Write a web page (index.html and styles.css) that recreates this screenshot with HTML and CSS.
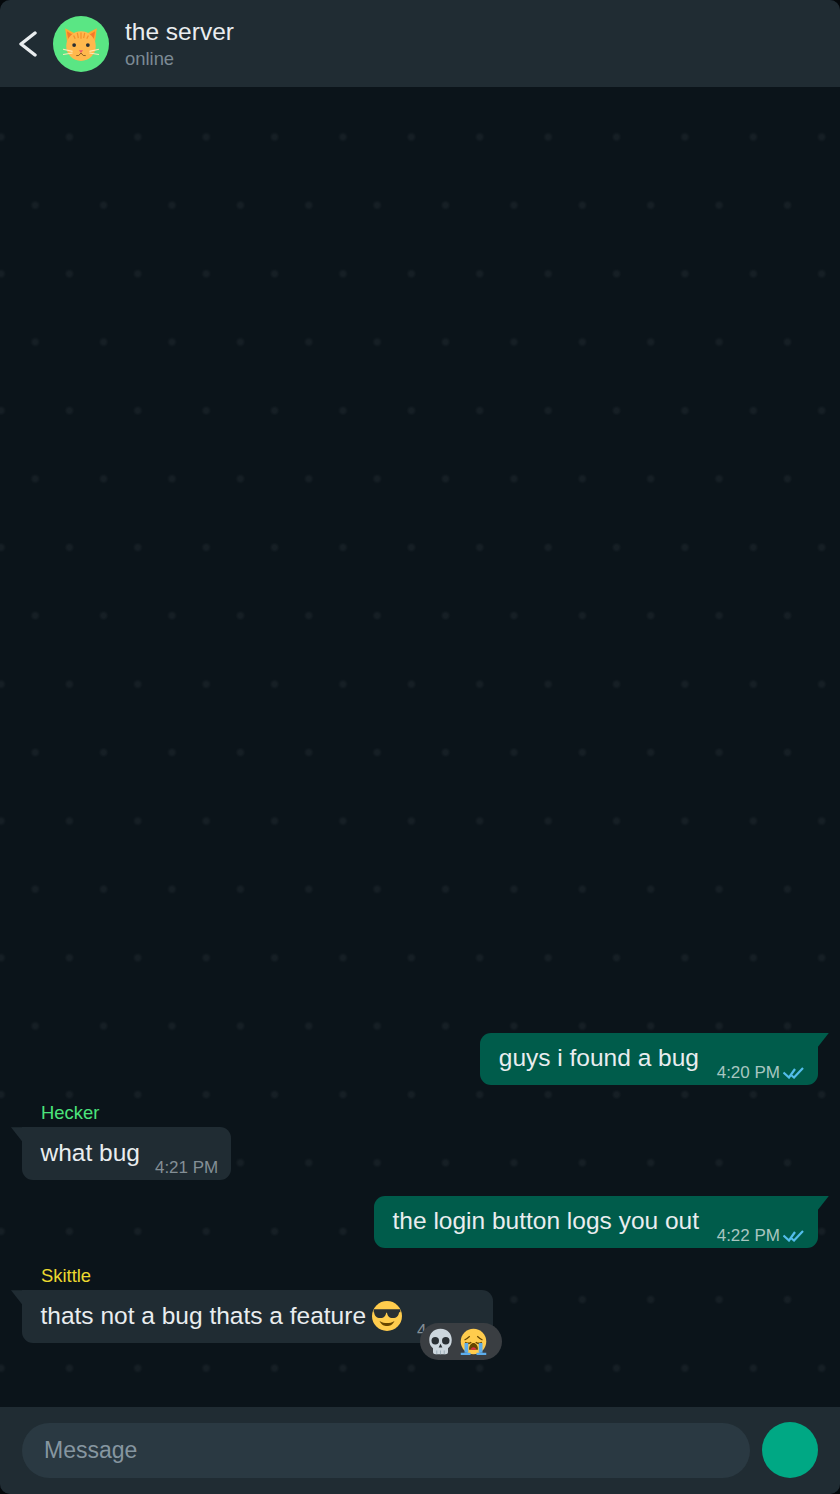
FILE: index.html
```html
<!DOCTYPE html>
<html lang="en">
<head>
    <meta charset="UTF-8">
    <meta name="viewport" content="width=device-width, initial-scale=1.0">
    <title>the server</title>
    <link rel="stylesheet" href="styles.css">
</head>
<body>
    <div class="app">
        <header class="chat-header">
            <svg class="back-icon" viewBox="0 0 20 26" width="20" height="26">
                <path d="M17 2 L3 13 L17 24" fill="none" stroke="#e9edef" stroke-width="3.400" stroke-linecap="round" stroke-linejoin="round"/>
            </svg>
            <div class="avatar">
                <svg viewBox="0 0 36 36" width="38" height="38">
                    <path d="M3 3 L5 18 L14 9 Z" fill="#ffac33"/>
                    <path d="M33 3 L31 18 L22 9 Z" fill="#ffac33"/>
                    <path d="M4.600 6 L6 14 L10.500 9.500 Z" fill="#f4792b"/>
                    <path d="M31.400 6 L30 14 L25.500 9.500 Z" fill="#f4792b"/>
                    <ellipse cx="18" cy="20" rx="14" ry="14" fill="#ffb84d"/>
                    <path d="M18 7v6M14.500 7.500l1 5M21.500 7.500l-1 5M11 10l1.500 3M25 10l-1.500 3" stroke="#f4902b" stroke-width="1.200" fill="none"/>
                    <circle cx="11.500" cy="19" r="1.800" fill="#292f33"/>
                    <circle cx="24.500" cy="19" r="1.800" fill="#292f33"/>
                    <path d="M16 24h4l-2 2.500z" fill="#ea596e"/>
                    <path d="M13.500 29q2.500 1 4.500 -2.500q2 3.500 4.500 2.500" stroke="#8a5a1e" stroke-width="0.900" fill="none"/>
                    <path d="M1 23l9 2M1 28l9 -1.500M35 23l-9 2M35 28l-9 -1.500" stroke="#ffe8b6" stroke-width="1" fill="none"/>
                </svg>
            </div>
            <div class="chat-title">
                <div class="chat-name">the server</div>
                <div class="chat-status">online</div>
            </div>
        </header>

        <main class="chat-body">
            <div class="msg sent">
                <div class="bubble">
                    <span class="msg-text">guys i found a bug</span>
                    <span class="msg-time">4:20 PM</span>
                    <svg class="ticks" viewBox="0 0 21 12" width="21" height="12">
                        <path d="M.5 5.500 L6 10.500 L12 2M8 8 L11 10.500 L20 1" fill="none" stroke="#53bdeb" stroke-width="2.200"/>
                    </svg>
                </div>
            </div>

            <div class="msg received">
                <div class="sender sender-green">Hecker</div>
                <div class="bubble">
                    <span class="msg-text">what bug</span>
                    <span class="msg-time">4:21 PM</span>
                </div>
            </div>

            <div class="msg sent">
                <div class="bubble">
                    <span class="msg-text">the login button logs you out</span>
                    <span class="msg-time">4:22 PM</span>
                    <svg class="ticks" viewBox="0 0 21 12" width="21" height="12">
                        <path d="M.5 5.500 L6 10.500 L12 2M8 8 L11 10.500 L20 1" fill="none" stroke="#53bdeb" stroke-width="2.200"/>
                    </svg>
                </div>
            </div>

            <div class="msg received">
                <div class="sender sender-yellow">Skittle</div>
                <div class="bubble">
                    <span class="msg-text">thats not a bug thats a feature</span>
                    <svg class="inline-emoji" viewBox="0 0 36 36" width="30" height="30">
                        <circle cx="18" cy="18" r="18" fill="#ffcc4d"/>
                        <path d="M2 10h32v3.500h-1.500c-.5 4.500-3 7-7.500 7s-6.500-3-7-6.500h-1c-.5 3.500-2.500 6.500-7 6.500s-7-2.500-7.500-7H2z" fill="#292f33"/>
                        <path d="M9 24c2 4.500 5.500 6 9 6s7-1.500 9-6c-3 2-6 2.500-9 2.500S12 26 9 24z" fill="#664500"/>
                    </svg>
                    <span class="msg-time">4:23 PM</span>
                    <div class="reactions">
                        <svg viewBox="0 0 36 36" width="27" height="27">
                            <path d="M18 1C8 1 3 8 3 16c0 5 2 9 5 11v5c0 2 1.500 3 3 3h14c1.500 0 3-1 3-3v-5c3-2 5-6 5-11C33 8 28 1 18 1z" fill="#ccd6dd"/>
                            <circle cx="11" cy="17" r="5" fill="#292f33"/>
                            <circle cx="25" cy="17" r="5" fill="#292f33"/>
                            <path d="M18 21l-2.500 5h5z" fill="#292f33"/>
                            <path d="M13 30v5M18 30v5M23 30v5" stroke="#99aab5" stroke-width="1.200"/>
                        </svg>
                        <svg viewBox="0 0 36 36" width="27" height="27">
                            <circle cx="18" cy="18" r="17" fill="#ffcc4d"/>
                            <path d="M6 16c2-1 5-3 7-5M30 16c-2-1-5-3-7-5" stroke="#664500" stroke-width="1.500" fill="none"/>
                            <path d="M7 19q4 3 8 0M21 19q4 3 8 0" stroke="#664500" stroke-width="2" fill="none"/>
                            <path d="M12 29c0-6 3-9 6-9s6 3 6 9z" fill="#664500"/>
                            <path d="M14.500 29c0-2 1.500-3.500 3.500-3.500s3.500 1.500 3.500 3.500z" fill="#dd2e44"/>
                            <path d="M6 20h5v13H6zM25 20h5v13h-5z" fill="#5dadec"/>
                            <path d="M1 33h13v3H1zM22 33h13v3H22z" fill="#5dadec"/>
                        </svg>
                    </div>
                </div>
            </div>
        </main>

        <footer class="composer">
            <div class="message-input">Message</div>
            <div class="send-button"></div>
        </footer>
    </div>
</body>
</html>
```

FILE: styles.css
```css
* {
    box-sizing: border-box;
}

html, body {
    height: 100%;
    margin: 0;
    background-color: #05090c;
    font-family: "Liberation Sans", Arial, sans-serif;
}

.app {
    display: flex;
    flex-direction: column;
    height: 1494px;
    overflow: hidden;
    border-radius: 10px;
    background-color: #0b141a;
    background-image:
        radial-gradient(circle, #161f25 0, #161f25 2px, rgba(22, 31, 37, 0) 5px),
        radial-gradient(circle, #161f25 0, #161f25 2px, rgba(22, 31, 37, 0) 5px);
    background-size: 68.4px 136.8px;
    background-position: -33.2px 68.6px, 1px 0;
}

.chat-header {
    display: flex;
    align-items: center;
    flex: none;
    height: 87px;
    padding-left: 18px;
    background-color: #202c33;
}

.back-icon {
    flex: none;
    margin-top: 1px;
}

.avatar {
    display: flex;
    align-items: center;
    justify-content: center;
    flex: none;
    width: 56px;
    height: 56px;
    margin-left: 15px;
    border-radius: 50%;
    background-color: #5ae684;
}

.chat-title {
    margin-left: 16px;
}

.chat-name {
    font-size: 24.5px;
    line-height: 29px;
    color: #e9edef;
}

.chat-status {
    margin-top: 1px;
    font-size: 18.4px;
    line-height: 24px;
    color: #7b8a94;
}

.chat-body {
    display: flex;
    flex: 1;
    flex-direction: column;
    justify-content: flex-end;
    gap: 16px;
    padding: 0 22px 64.25px;
}

.msg {
    display: flex;
    flex-direction: column;
}

.msg.sent {
    align-items: flex-end;
}

.msg.received {
    align-items: flex-start;
}

.sender {
    height: 26px;
    padding-top: 0.5px;
    padding-left: 19px;
    font-size: 18.4px;
    line-height: 21px;
}

.sender-green {
    color: #4be47c;
}

.sender-yellow {
    color: #ecd92f;
}

.bubble {
    position: relative;
    display: flex;
    height: 52.5px;
    padding: 11.4px 14px 13px 18.5px;
    border-radius: 11px;
    color: #e9edef;
}

.sent .bubble {
    border-top-right-radius: 0;
    background-color: #005c4b;
}

.received .bubble {
    padding-right: 13px;
    border-top-left-radius: 0;
    background-color: #202c33;
}

.bubble::before {
    content: "";
    position: absolute;
    top: 0;
    width: 11px;
    height: 14px;
}

.sent .bubble::before {
    right: -11px;
    background-color: #005c4b;
    clip-path: polygon(0 0, 100% 0, 0 100%);
}

.received .bubble::before {
    left: -11px;
    background-color: #202c33;
    clip-path: polygon(0 0, 100% 0, 100% 100%);
}

.msg-text {
    font-size: 24.5px;
    line-height: 28.5px;
}

.msg-time {
    align-self: flex-end;
    margin-bottom: -11px;
    margin-left: 15px;
    font-size: 17px;
    line-height: 20px;
    white-space: nowrap;
    color: #848f96;
}

.sent .msg-time {
    margin-left: 17.7px;
    color: #a8c6c0;
}

.ticks {
    flex: none;
    align-self: flex-end;
    margin-bottom: -7px;
    margin-left: 3px;
}

.inline-emoji {
    flex: none;
    margin: -1px 0 0 6px;
}

.reactions {
    position: absolute;
    right: -9px;
    bottom: -17px;
    display: flex;
    align-items: center;
    gap: 6px;
    width: 82px;
    height: 37px;
    padding-left: 7px;
    border-radius: 19px;
    background-color: #3a3e42;
}

.composer {
    display: flex;
    align-items: center;
    flex: none;
    gap: 12px;
    height: 87px;
    padding: 0 22px;
    background-color: #202c33;
}

.message-input {
    flex: 1;
    height: 55px;
    padding-left: 22px;
    border-radius: 28px;
    font-size: 23px;
    line-height: 55px;
    color: #8696a0;
    background-color: #2a3942;
}

.send-button {
    flex: none;
    width: 56px;
    height: 56px;
    margin-bottom: 1px;
    border-radius: 50%;
    background-color: #00a884;
}
```
